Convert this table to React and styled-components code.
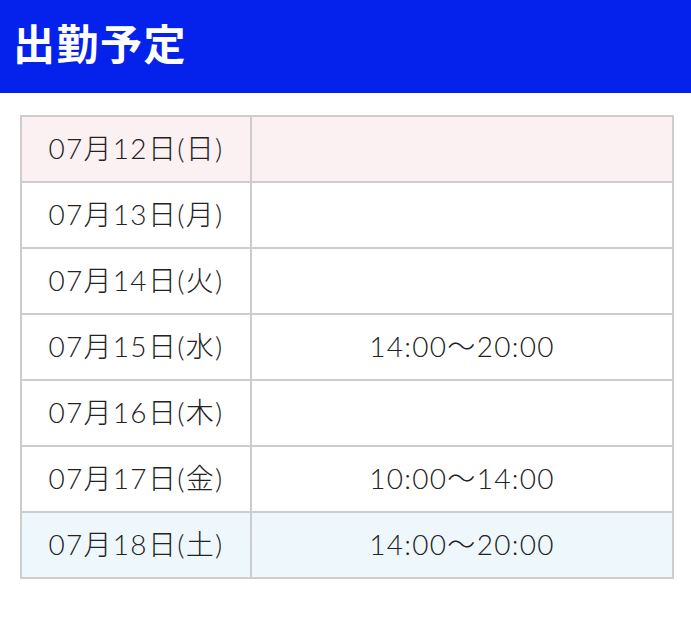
import React from "react";
import styled, { createGlobalStyle } from "styled-components";

const GlobalStyle = createGlobalStyle`
  html, body {
    margin: 0;
    padding: 0;
    background: #ffffff;
  }
  * {
    box-sizing: border-box;
  }
`;

const schedule = [
  { date: "07月12日(日)", time: "", day: "sun" },
  { date: "07月13日(月)", time: "" },
  { date: "07月14日(火)", time: "" },
  { date: "07月15日(水)", time: "14:00〜20:00" },
  { date: "07月16日(木)", time: "" },
  { date: "07月17日(金)", time: "10:00〜14:00" },
  { date: "07月18日(土)", time: "14:00〜20:00", day: "sat" }
];

const rowColors = {
  sun: "#fcf1f2",
  sat: "#eef8fc"
};

const Page = styled.div`
  width: 100%;
  min-height: 626px;
  background: #ffffff;
  font-family: "Lato", "Noto Sans CJK JP", sans-serif;
`;

const Header = styled.header`
  height: 93px;
  background: #0521ec;
  display: flex;
  align-items: center;
  padding: 0 0 10px 13px;
`;

const Title = styled.h1`
  margin: 0;
  color: #ffffff;
  font-family: "Noto Sans CJK JP", sans-serif;
  font-size: 42px;
  font-weight: 700;
  letter-spacing: 1.5px;
`;

const Table = styled.div`
  margin: 22px 17px 0 20px;
  display: grid;
  grid-template-columns: 228px 1fr;
  grid-auto-rows: 64px;
  gap: 2px;
  padding: 2px;
  background: #cdcdcd;
`;

const Cell = styled.div`
  display: flex;
  align-items: center;
  justify-content: center;
  background: ${props => rowColors[props.day] || "#ffffff"};
  color: #222222;
  font-size: 28px;
  font-weight: 300;
  letter-spacing: 1.3px;
  padding-bottom: 4px;
`;

const App = () => {
  return (
    <Page>
      <GlobalStyle />
      <Header>
        <Title>出勤予定</Title>
      </Header>
      <Table>
        {schedule.map(row => (
          <React.Fragment key={row.date}>
            <Cell day={row.day}>{row.date}</Cell>
            <Cell day={row.day}>{row.time}</Cell>
          </React.Fragment>
        ))}
      </Table>
    </Page>
  );
};

export default App;
